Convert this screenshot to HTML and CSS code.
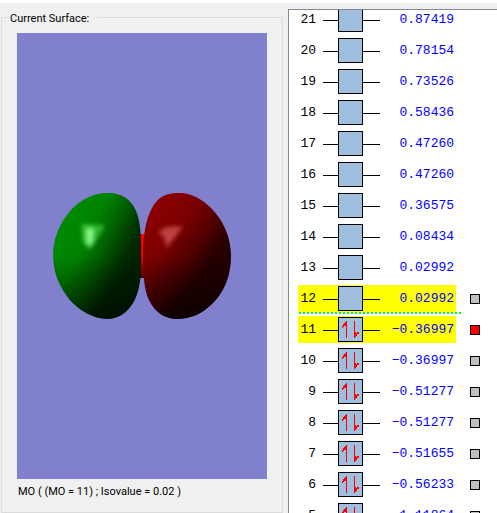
FILE: index.html
```html
<!DOCTYPE html>
<html lang="en">
<head>
<meta charset="utf-8">
<title>Molecular Orbitals</title>
<link rel="stylesheet" href="styles.css">
</head>
<body>
<main class="editor">
  <fieldset class="surface">
    <legend>Current Surface:</legend>
    <svg class="view" viewBox="0 0 250 446" preserveAspectRatio="xMidYMid meet" role="img" aria-label="Orbital surface">
      <defs>
        <linearGradient id="green" gradientUnits="userSpaceOnUse" x1="50" y1="185" x2="122" y2="222">
          <stop offset="0" stop-color="#008a00"/>
          <stop offset="0.35" stop-color="#008000"/>
          <stop offset="0.6" stop-color="#005a00"/>
          <stop offset="0.85" stop-color="#002c00"/>
          <stop offset="1" stop-color="#002200"/>
        </linearGradient>
        <linearGradient id="red" gradientUnits="userSpaceOnUse" x1="135" y1="185" x2="202" y2="235">
          <stop offset="0" stop-color="#8a0000"/>
          <stop offset="0.35" stop-color="#780000"/>
          <stop offset="0.65" stop-color="#4c0000"/>
          <stop offset="0.85" stop-color="#2a0000"/>
          <stop offset="1" stop-color="#220000"/>
        </linearGradient>
        <linearGradient id="neck" x1="0" y1="0" x2="0" y2="1">
          <stop offset="0" stop-color="#ff0000"/>
          <stop offset="0.5" stop-color="#f00000"/>
          <stop offset="1" stop-color="#400000"/>
        </linearGradient>
        <linearGradient id="shade" x1="0" y1="0" x2="0" y2="1">
          <stop offset="0.5" stop-color="#000" stop-opacity="0"/>
          <stop offset="1" stop-color="#000" stop-opacity="0.55"/>
        </linearGradient>
        <filter id="soft" x="-60%" y="-60%" width="220%" height="220%"><feGaussianBlur stdDeviation="2"/></filter>
      </defs>
      <rect x="123" y="201" width="5" height="44" fill="url(#neck)"/>
      <g>
        <path fill="url(#green)" d="M90 160C102 159 114 165 119 178C123 187 124 200 124 215V232C124 246 122 260 116 270C109 281 100 286 90 286C77 286 61 277 52 266C42 253 36 239 36 222C36 205 43 190 53 178C63 167 76 160 90 160Z"/>
        <path fill="url(#shade)" d="M90 160C102 159 114 165 119 178C123 187 124 200 124 215V232C124 246 122 260 116 270C109 281 100 286 90 286C77 286 61 277 52 266C42 253 36 239 36 222C36 205 43 190 53 178C63 167 76 160 90 160Z"/>
        <path fill="#40c840" opacity="0.75" filter="url(#soft)" d="M64 191L88 192L80 206L73 217L66 210Z"/>
        <path fill="#90ff90" opacity="0.9" filter="url(#soft)" d="M69 195L77 195L76 209L73 213L69 209Z"/>
      </g>
      <g>
        <path fill="url(#red)" d="M160 160C172 159 184 165 194 175C206 187 214 204 214 223C214 243 207 259 196 270C185 281 173 286 160 286C149 286 138 280 132 267C127 257 126 240 126 223C126 206 128 187 135 175C140 165 149 160 160 160Z"/>
        <path fill="url(#shade)" d="M160 160C172 159 184 165 194 175C206 187 214 204 214 223C214 243 207 259 196 270C185 281 173 286 160 286C149 286 138 280 132 267C127 257 126 240 126 223C126 206 128 187 135 175C140 165 149 160 160 160Z"/>
        <path fill="#c84848" opacity="0.9" filter="url(#soft)" d="M141 199L150 194L166 193L158 204L149 215L147 204Z"/>
      </g>
    </svg>
    <p class="caption">MO ( (MO = 11) ; Isovalue = 0.02 )</p>
  </fieldset>
  <section class="levels" aria-label="Orbital energies">
    <ol class="list" id="list"></ol>
  </section>
</main>
<script src="levels.js"></script>
</body>
</html>
```
FILE: styles.css
```css
* { box-sizing: border-box; }

body {
  margin: 0;
  padding-top: 3px;
  height: 100vh;
  background: #fff;
  color: #000;
  font-family: Roboto, "Liberation Sans", sans-serif;
  font-size: 11px;
  overflow: hidden;
}

.editor {
  display: grid;
  grid-template-columns: minmax(0, 27fr) minmax(0, 20fr);
  grid-template-rows: minmax(0, 1fr);
  gap: 5px;
  height: 100%;
  padding: 6px 0 0 1px;
  background: #f0f0f0;
}

.surface {
  display: flex;
  flex-direction: column;
  min-width: 0;
  margin: 0;
  padding: 8px 15px 0;
  border: 1px solid #dcdcdc;
}

.surface legend {
  margin-left: -8px;
  padding: 4px 8px 0 1px;
  line-height: 12px;
}

.view {
  display: block;
  flex: 1 1 0;
  min-height: 0;
  width: 100%;
  background: #8080cc;
}

.caption {
  margin: 0;
  padding: 5px 0 12px 1px;
  line-height: 16px;
}

.levels {
  min-width: 0;
  border: solid #828790;
  border-width: 1px 0 0 1px;
  background: #fff;
  overflow: hidden;
}

.list {
  margin: -4px 0 0;
  padding: 0 0 0 9px;
  list-style: none;
  font-family: "Liberation Mono", "Courier New", monospace;
  font-size: 13px;
}

.level {
  display: flex;
  align-items: center;
  gap: 14px;
  height: 27px;
  margin-bottom: 4px;
}

.entry {
  display: flex;
  align-items: center;
  width: 158px;
  height: 27px;
}

.picked .entry { background: #ff0; }

.number {
  width: 18px;
  margin-right: 7px;
  text-align: right;
}

.stem {
  width: 15px;
  height: 3px;
  border-bottom: 1px solid #000;
}

.stem.end { width: 17px; }

.box {
  width: 25px;
  height: 25px;
  border: 1px solid #000;
  background: #a0bede;
}

.box svg { display: block; }

.energy {
  flex: 1;
  padding-right: 2px;
  text-align: right;
  color: #00f;
}

.show {
  appearance: none;
  width: 10px;
  height: 10px;
  margin: 0;
  border: 1px solid #000;
  background: #c0c0c0;
}

.show:checked { background: #f00; }

.gap {
  width: 162px;
  height: 2px;
  margin: -4px 0 2px 1px;
  background: repeating-linear-gradient(90deg, #0f0 0 2px, transparent 2px 4px);
}
```
FILE: levels.js
```js
const energies = [
  [21, "0.87419"], [20, "0.78154"], [19, "0.73526"], [18, "0.58436"],
  [17, "0.47260"], [16, "0.47260"], [15, "0.36575"], [14, "0.08434"],
  [13, "0.02992"], [12, "0.02992"], [11, "−0.36997"], [10, "−0.36997"],
  [9, "−0.51277"], [8, "−0.51277"], [7, "−0.51655"], [6, "−0.56233"],
  [5, "−1.11864"]
];
const homo = 11;
const spins = '<svg width="23" height="23" viewBox="0 0 23 23" shape-rendering="crispEdges" aria-hidden="true">' +
  '<path fill="#f00" d="M7 3H8V20H7V8H5V9H4V10H3V8H4V6H5V5H6V4H7ZM15 3H16V14H17V15H18V14H20V16H18V18H17V19H16V20H15Z"/></svg>';

document.getElementById("list").innerHTML = energies.map(([n, e]) => {
  const filled = n <= homo;
  const picked = n === homo || n === homo + 1;
  const toggle = n <= homo + 1
    ? `<input class="show" type="checkbox" aria-label="Show orbital ${n}"${n === homo ? " checked" : ""}>` : "";
  const divider = n === homo + 1 ? '<li class="gap" role="separator"></li>' : "";
  return `<li class="level${picked ? " picked" : ""}"><div class="entry">` +
    `<span class="number">${n}</span><span class="stem"></span>` +
    `<span class="box">${filled ? spins : ""}</span><span class="stem end"></span>` +
    `<span class="energy">${e}</span></div>${toggle}</li>${divider}`;
}).join("");
```
